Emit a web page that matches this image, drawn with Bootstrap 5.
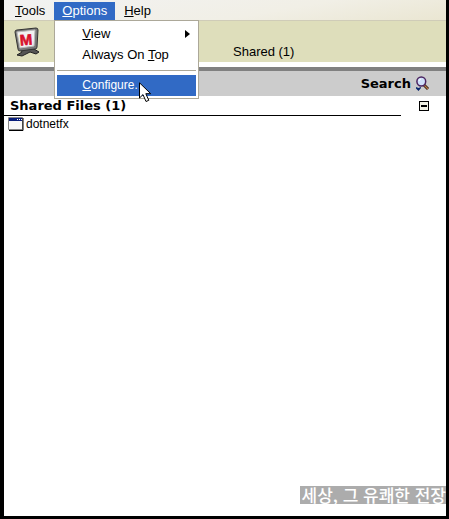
<!DOCTYPE html>
<html lang="en">
<head>
<meta charset="utf-8">
<meta name="viewport" content="width=device-width, initial-scale=1">
<title>Shared Files</title>
<link href="https://cdn.jsdelivr.net/npm/bootstrap@5.3.0/dist/css/bootstrap.min.css" rel="stylesheet">
<style>
body{font-family:"Liberation Sans","Noto Sans CJK KR",sans-serif;font-size:13px;line-height:20px;color:#000;background:#000}
.app-window{background:#fff;border:solid #000;border-width:0 3px 3px 4px;border-bottom-left-radius:4px;border-bottom-right-radius:4px}
.menu-strip{height:21px;background:linear-gradient(170deg,#f2f2f2,#f1efe6 60%,#eae6d2);border-bottom:1px solid #cfccb8;padding-left:3px;gap:1px}
.menu-item{border:0;background:none;color:#000;font-size:13px;line-height:18px;padding:0 8px;height:18px;margin-top:2px;display:block}
.menu-item.active{background:#316ac5;color:#fff}
.menu-popup{position:absolute;top:20px;left:0;z-index:5;width:145px;background:#fff;border:1px solid #aca899;padding:2px;font-size:13px}
.popup-item{border:0;background:none;color:#000;line-height:21px;padding:0 6px 0 25px;text-align:left}
.popup-item.active{background:#316ac5;color:#fff;font-size:12px}
.popup-rule{margin:5px 0 4px;border-top:1px solid #aca899;opacity:1}
.pointer{position:absolute;left:84px;top:61px}
.tool-band{height:41px;background:#dedebb;padding-left:10px}
.shared-tab{margin-left:192px;font-size:13px;color:#000}
.search-band{margin-top:5px;border-top:4px solid #808080;background:#ccc;height:29px;padding-right:16px}
.heavy{font-family:"DejaVu Sans",sans-serif;font-weight:700;font-size:13px;color:#000}
.search-btn{border:0;background:none;padding:0}
.list-head{padding-right:17px}
.list-title{flex:1;border-bottom:1px solid #000;margin-right:18px;padding-left:6px;line-height:19px}
.toggle-btn{width:10px;height:10px;border:1px solid #000;background:#f0f0e4;padding:0;display:flex;align-items:center;justify-content:center}
.toggle-btn span{width:6px;height:2px;background:#000}
.file-row{padding-left:4px;line-height:16px;color:#000;font-size:12px;gap:2px}
.caption-tag{background:#acacac;color:#fff;font-family:"Noto Sans CJK KR",sans-serif;font-weight:500;font-size:17px;line-height:18px;padding-left:2px;margin-bottom:12px}
</style>
<script src="https://cdn.jsdelivr.net/npm/bootstrap@5.3.0/dist/js/bootstrap.bundle.min.js"></script>
</head>
<body>
<div class="app-window d-flex flex-column min-vh-100">
  <nav class="menu-strip d-flex" aria-label="Menu">
    <button class="menu-item" type="button"><u>T</u>ools</button>
    <div class="position-relative">
      <button class="menu-item active" type="button"><u>O</u>ptions</button>
      <div class="menu-popup d-flex flex-column">
        <button class="popup-item d-flex justify-content-between align-items-center" type="button"><span><u>V</u>iew</span>
          <svg width="5" height="8" viewBox="0 0 5 8"><path d="M0 0L5 4L0 8Z"/></svg></button>
        <button class="popup-item" type="button">Always On <u>T</u>op</button>
        <hr class="popup-rule">
        <button class="popup-item active" type="button"><u>C</u>onfigure.</button>
        <svg class="pointer" width="13" height="21" viewBox="0 0 13 21"><path d="M.5 .8V16L4 12.6L7 19.5L9.8 18.3L6.8 11.7H11.7Z" fill="#fff" stroke="#000"/></svg>
      </div>
    </div>
    <button class="menu-item" type="button"><u>H</u>elp</button>
  </nav>
  <div class="tool-band d-flex align-items-center">
    <svg width="27" height="30" viewBox="0 0 27 30">
      <path d="M7 23L13 22L20 22L25 25L22 27L16 25L8 29L3 28L8 25Z" fill="#555" stroke="#222"/>
      <path d="M1 5Q1 3 3 3L22 1Q24 1 24 3L23 20Q23 22 21 22L6 24Q4 24 4 22Z" fill="#777" stroke="#333"/>
      <path d="M3 5L21 3L20 19L6 21Z" fill="#f1f1f1" stroke="#bbb"/>
      <text x="12" y="18" text-anchor="middle" font-family="Liberation Sans" font-weight="700" font-size="15" fill="#d8102c" stroke="#d8102c" stroke-width=".6" transform="rotate(-5 12 12)">M</text>
    </svg>
    <a class="shared-tab text-decoration-none align-self-end" href="#">Shared (1)</a>
  </div>
  <div class="search-band d-flex justify-content-end align-items-center">
    <button class="search-btn heavy d-flex align-items-center" type="button">Search
      <svg class="ms-1" width="15" height="16" viewBox="0 0 15 16"><path d="M9 9L13 13" stroke="#2b1a14" stroke-width="3"/><path d="M9 9L13 13" stroke="#b87945" stroke-width="1.3"/><circle cx="6.3" cy="5.5" r="4.4" fill="#cfe0fa" stroke="#4b2461" stroke-width="1.5"/><path d="M4 5Q4 3.5 6 3" stroke="#fff" fill="none"/><path d="M1 11L3.5 12L6 11V12L3.5 15L1 12.5Z" fill="#09266c"/></svg>
    </button>
  </div>
  <div class="list-head d-flex align-items-center">
    <div class="list-title heavy">Shared Files (1)</div>
    <button class="toggle-btn" type="button" aria-label="Collapse"><span></span></button>
  </div>
  <a class="file-row d-flex align-items-center text-decoration-none" href="#">
    <svg width="16" height="14" viewBox="0 0 16 14"><path d="M.5 .5H14.5V12.5H.5Z" fill="#f8f8f8" stroke="#888"/><path d="M1 1H14V4H1Z" fill="#0a1f7c"/><path d="M9 2h1v1H9zM11 2h1v1h-1zM13 2h1v1h-1z" fill="#fff"/><path d="M15 1V13.5H1" fill="none" stroke="#000"/></svg>
    <span>dotnetfx</span>
  </a>
  <div class="caption-tag mt-auto ms-auto text-nowrap" lang="ko">세상, 그 유쾌한 전장</div>
</div>
</body>
</html>
